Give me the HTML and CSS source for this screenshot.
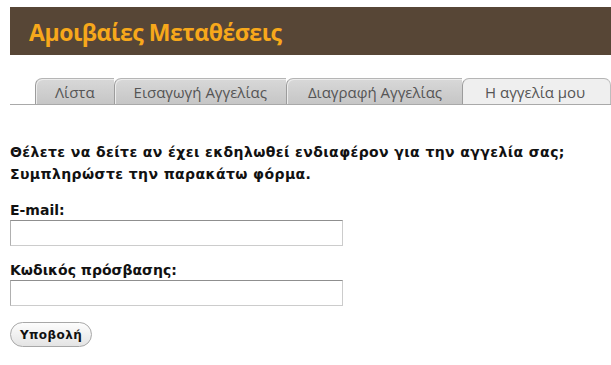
FILE: index.html
```html
<!DOCTYPE html>
<html>
  <head>
    <title>Αμοιβαίες Μεταθέσεις</title>
    <link rel="stylesheet" href="styles.css">
  </head>
  <body>
    <div class="header">
      <h1>Αμοιβαίες Μεταθέσεις</h1>
    </div>

    <ul class="tabs">
      <li class="tab">Λίστα</li>
      <li class="tab">Εισαγωγή Αγγελίας</li>
      <li class="tab">Διαγραφή Αγγελίας</li>
      <li class="tab active">Η αγγελία μου</li>
    </ul>

    <form class="login-form">
      <p class="intro">
        Θέλετε να δείτε αν έχει εκδηλωθεί ενδιαφέρον για την αγγελία σας;<br />
        Συμπληρώστε την παρακάτω φόρμα.
      </p>

      <div class="form-group">
        <label for="email">E-mail:</label>
        <input type="text" id="email" />
      </div>

      <div class="form-group">
        <label for="password">Κωδικός πρόσβασης:</label>
        <input type="password" id="password" />
      </div>

      <button type="submit">Υποβολή</button>
    </form>
  </body>
</html>
```

FILE: styles.css
```css
:root {
  --brown: #574636;
  --orange: #f7a81b;
  --tab-text: #555555;
  --tab-border: #a9a9a9;
  --text: #111111;
}

* {
  margin: 0;
  padding: 0;
  box-sizing: border-box;
}

body {
  padding: 7px 0 0 10px;
  font-family: "DejaVu Sans", Verdana, sans-serif;
  background: #ffffff;
  color: var(--text);
  overflow: hidden;
}

.header {
  height: 48px;
  background: var(--brown);
  display: flex;
  align-items: center;
  padding-left: 19px;
}

.header h1 {
  font-family: "Open Sans", sans-serif;
  font-size: 23px;
  font-weight: 700;
  color: var(--orange);
  letter-spacing: -0.45px;
  line-height: 1;
  margin-top: 2px;
  white-space: nowrap;
}

.tabs {
  list-style: none;
  display: flex;
  margin-top: 23px;
  padding-left: 25px;
  border-bottom: 1px solid var(--tab-border);
  height: 27px;
}

.tab {
  flex-shrink: 0;
  height: 26px;
  padding: 0 19px;
  font-family: "Open Sans", sans-serif;
  font-size: 15px;
  line-height: 26px;
  white-space: nowrap;
  color: var(--tab-text);
  background: linear-gradient(#d8d8d8, #c6c6c6);
  border-top: 1px solid #b5b5b5;
  border-left: 1px solid #9c9c9c;
  border-top-left-radius: 7px;
  box-shadow: inset 1px 1px 0 #ececec;
}

.tab:nth-child(3) {
  padding: 0 20px 0 21px;
}

.tab.active {
  flex: 1;
  background: #efefef;
  border-top-right-radius: 7px;
  border-right: 1px solid #bdbdbd;
  box-shadow: none;
  padding-left: 22px;
}

.login-form {
  margin-top: 36px;
}

.intro {
  font-size: 14px;
  font-weight: 700;
  letter-spacing: 0.4px;
  line-height: 22px;
  margin-bottom: 17px;
}

.form-group {
  margin-bottom: 16px;
}

label {
  display: block;
  font-size: 14px;
  font-weight: 700;
  line-height: 16px;
  margin-bottom: 2px;
}

input[type="text"],
input[type="password"] {
  display: block;
  width: 333px;
  height: 26px;
  border: 1px solid #cccccc;
  border-top-color: #8f8f8f;
  border-left-color: #b0b0b0;
  background: #ffffff;
  font-size: 13px;
  padding: 2px 4px;
}

button {
  width: 82px;
  height: 25px;
  border: 1px solid #a8a8a8;
  border-radius: 13px;
  background: linear-gradient(#fdfdfd, #e4e4e4);
  font-family: "DejaVu Sans", Verdana, sans-serif;
  font-size: 12px;
  font-weight: 700;
  letter-spacing: 0.4px;
  color: #111111;
  cursor: pointer;
}
```
